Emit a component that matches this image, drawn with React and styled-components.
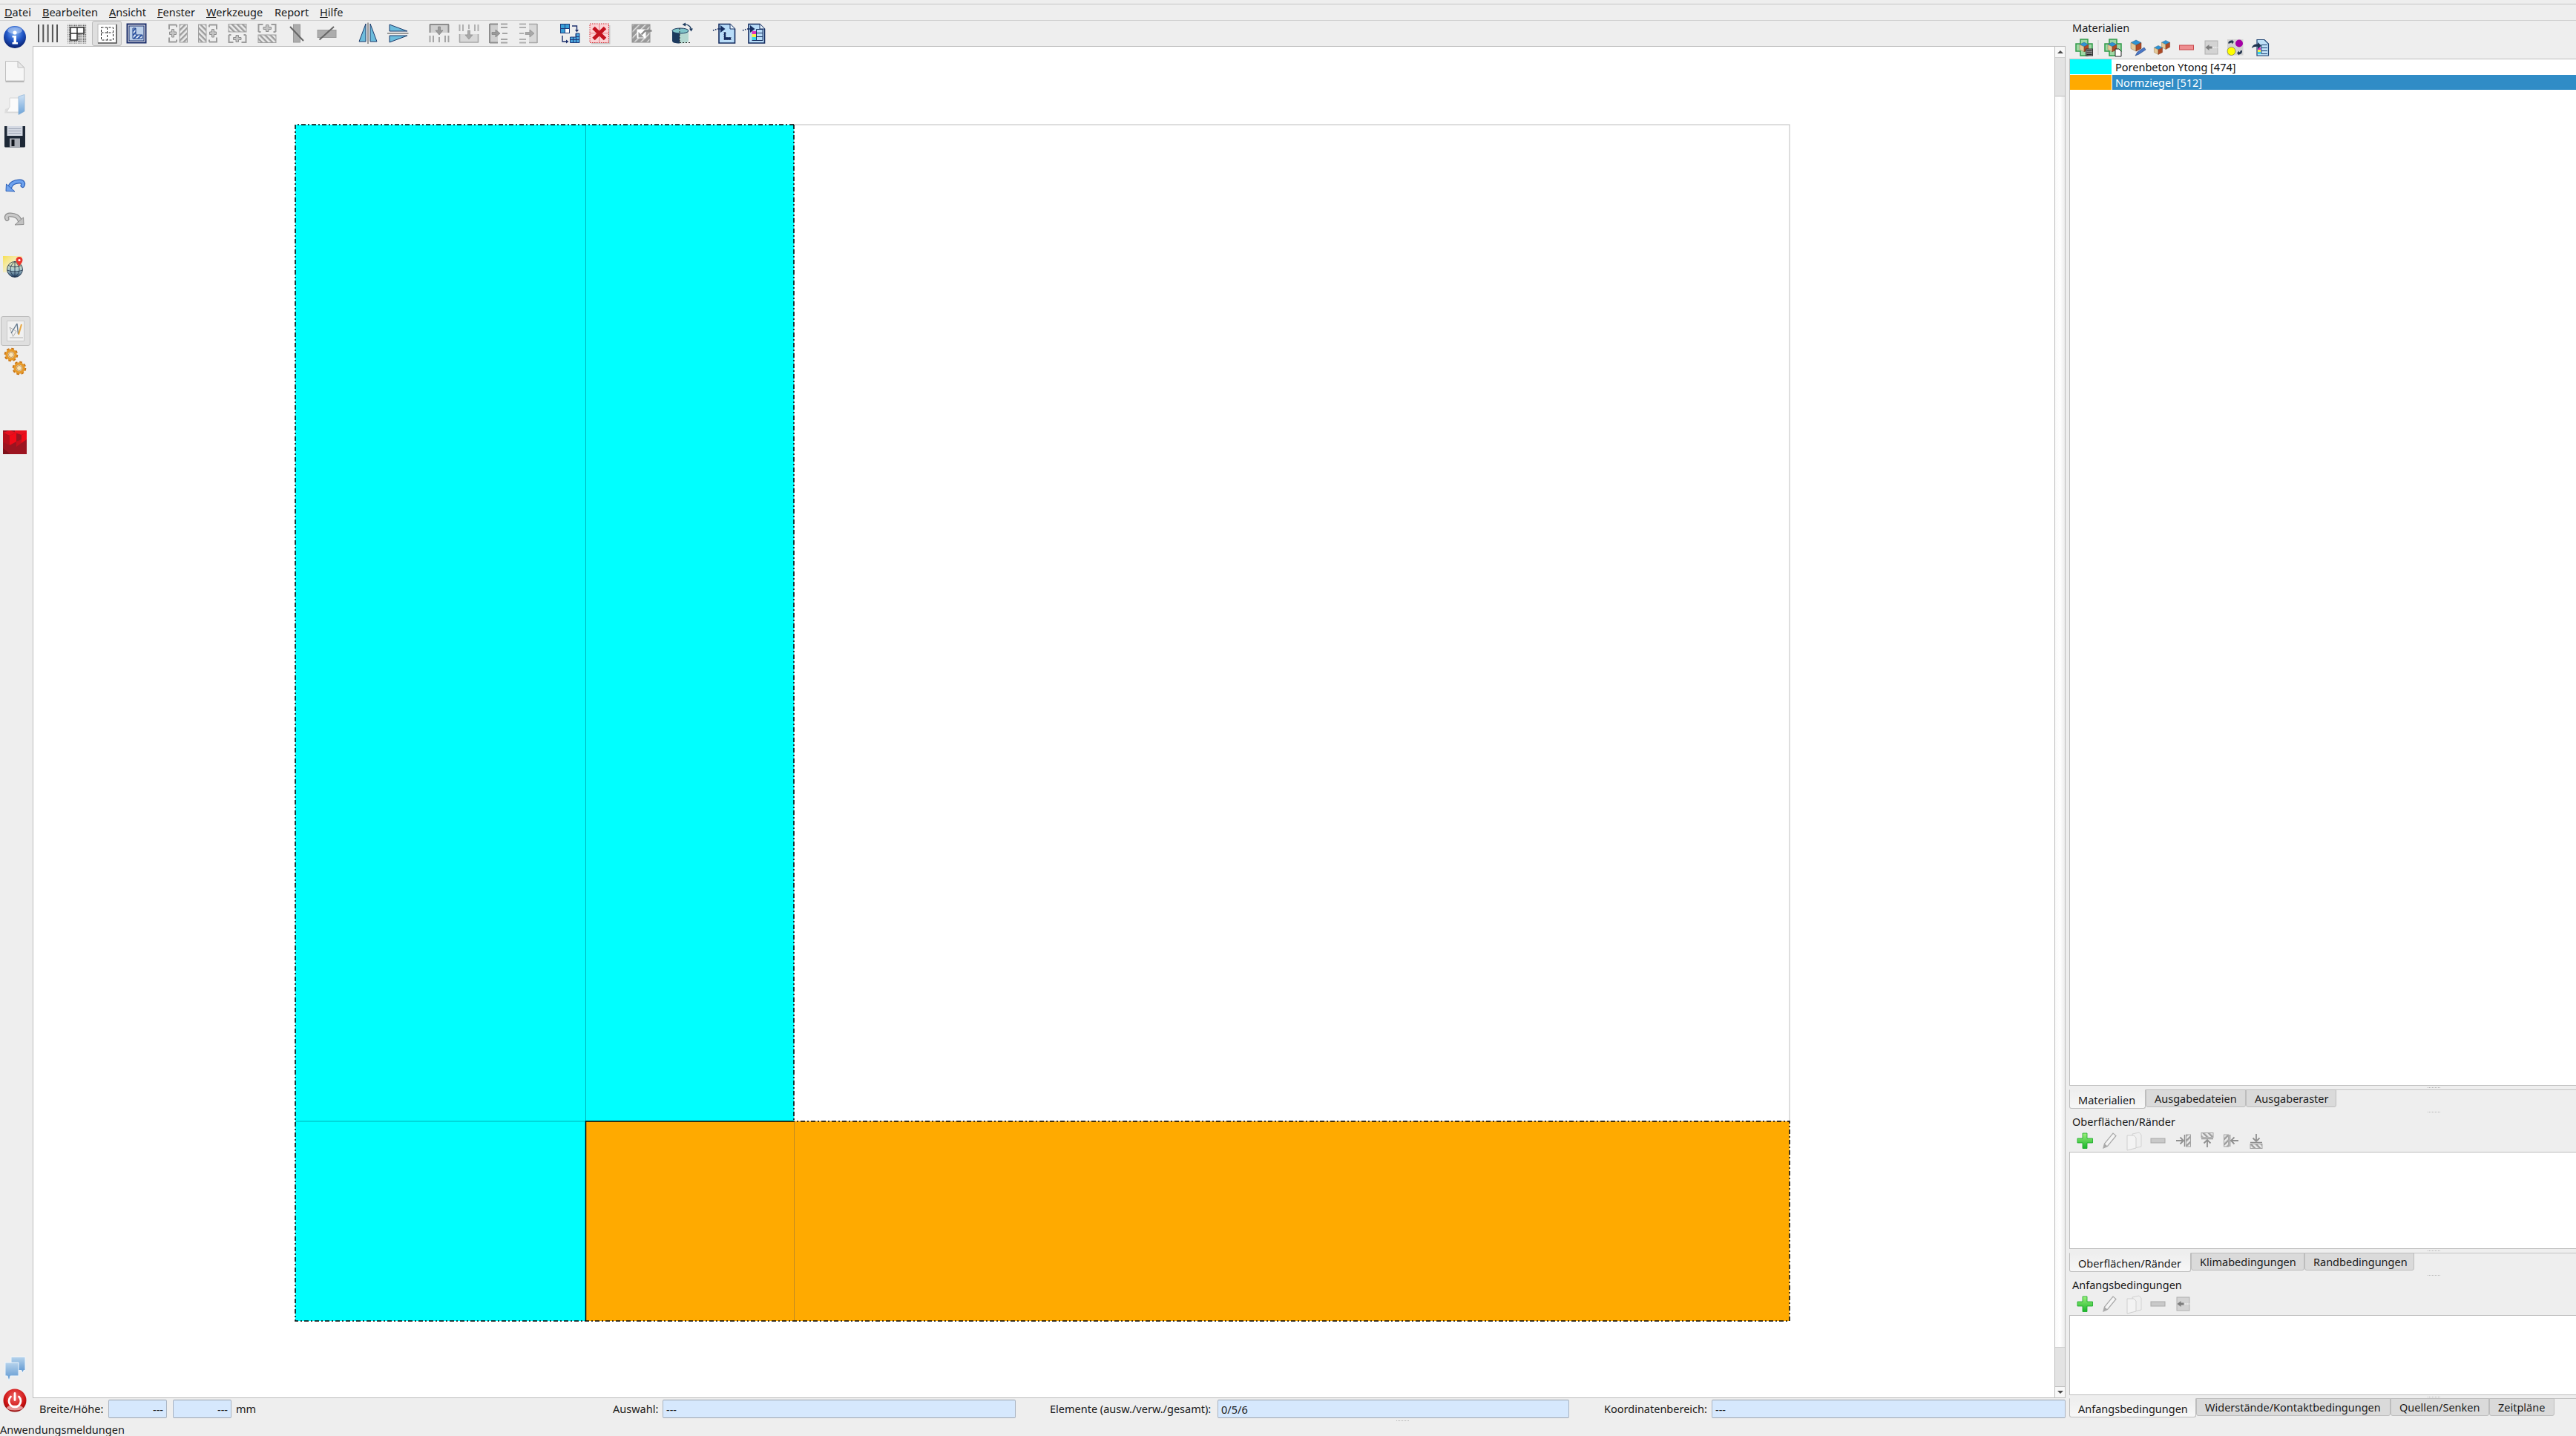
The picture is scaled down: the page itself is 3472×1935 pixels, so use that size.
import React from "react";
import styled, { createGlobalStyle } from "styled-components";

const Global = createGlobalStyle`
  html, body { margin: 0; padding: 0; background: #eeeeee; overflow: hidden; }
  * { box-sizing: border-box; }
`;

const Window = styled.div`
  width: 3472px;
  height: 1935px;
  display: flex;
  flex-direction: column;
  background: #eeeeee;
  color: #1a1a1a;
  font-family: "Noto Sans", "Open Sans", sans-serif;
  font-size: 14.5px;
  overflow: hidden;
`;
const TopStrip = styled.div`
  height: 6px;
  flex: none;
  border-bottom: 1px solid #c4c4c4;
`;
const MenuBar = styled.div`
  height: 22px;
  flex: none;
  display: flex;
  align-items: flex-start;
  border-bottom: 1px solid #cfcfcf;
`;
const MenuItem = styled.div`
  width: ${(p) => p.$w}px;
  padding-left: ${(p) => p.$pad || 0}px;
  line-height: 20px;
  white-space: nowrap;
`;
const Workspace = styled.div`
  flex: none;
  height: 1889px;
  display: flex;
`;
const LeftBar = styled.div`
  width: 44px;
  flex: none;
  display: flex;
  flex-direction: column;
  padding-bottom: 8px;
`;
const LeftSlot = styled.div`
  width: 40px;
  height: ${(p) => p.$h || 44}px;
  margin-top: ${(p) => p.$gap || 0}px;
  margin-left: ${(p) => (p.$active ? 1 : 0)}px;
  flex: none;
  display: flex;
  align-items: center;
  justify-content: center;
  ${(p) => p.$active && `
    background: #dfdfdf;
    border: 1px solid #bcbcbc;
    border-radius: 3px;
  `}
  ${(p) => p.$bottom && `margin-top: auto;`}
`;
const Center = styled.div`
  width: 2745px;
  flex: none;
  display: flex;
  flex-direction: column;
`;
const TopToolbar = styled.div`
  height: 34px;
  flex: none;
  display: flex;
  align-items: center;
`;
const ToolSlot = styled.div`
  width: 40px;
  height: 34px;
  flex: none;
  margin-left: ${(p) => p.$gap || 0}px;
  display: flex;
  align-items: center;
  justify-content: center;
  ${(p) => p.$active && `
    background: #dfdfdf;
    border: 1px solid #bcbcbc;
    border-radius: 3px;
  `}
`;
const CanvasRow = styled.div`
  flex: 1;
  display: flex;
  padding-right: 5px;
  min-height: 0;
`;
const Canvas = styled.div`
  flex: 1;
  background: #fff;
  border: 1px solid #bdbdbd;
  border-right: 0;
  padding: 104px 0 0 352px;
  overflow: hidden;
`;
const Drawing = styled.svg`
  display: block;
`;
const ScrollBar = styled.div`
  width: 15px;
  flex: none;
  display: flex;
  flex-direction: column;
  border: 1px solid #bdbdbd;
  background: linear-gradient(90deg, #fafafa, #ffffff 50%, #ececec);
`;
const ScrollButton = styled.div`
  height: 14px;
  flex: none;
  display: flex;
  align-items: center;
  justify-content: center;
  background: #f8f8f8;
  &::before {
    content: "";
    border-left: 4px solid transparent;
    border-right: 4px solid transparent;
    ${(p) => (p.$down ? "border-top" : "border-bottom")}: 4px solid #4a4a4a;
  }
`;
const ScrollThumb = styled.div`
  height: ${(p) => p.$h}px;
  flex: none;
  background: #e3e3e3;
  border-top: 1px solid #cfcfcf;
  border-bottom: 1px solid #bdbdbd;
`;
const ScrollTrack = styled.div`
  flex: 1;
`;
const StatusRow = styled.div`
  height: 33px;
  flex: none;
  display: flex;
  padding-top: 2px;
  position: relative;
`;
const StatusGroup = styled.div`
  width: ${(p) => p.$w}px;
  flex: none;
  display: flex;
  padding-left: ${(p) => p.$pad || 0}px;
  gap: ${(p) => p.$gap || 0}px;
`;
const StatusLabel = styled.div`
  width: ${(p) => p.$w}px;
  flex: none;
  margin-left: ${(p) => p.$gap || 0}px;
  line-height: 25px;
  white-space: nowrap;
`;
const Field = styled.div`
  width: ${(p) => p.$w}px;
  height: 25px;
  flex: none;
  margin-left: ${(p) => p.$gap || 0}px;
  padding: 0 4px;
  line-height: 24px;
  text-align: ${(p) => (p.$right ? "right" : "left")};
  background: #d6e8fd;
  border: 1px solid #aab4c2;
  border-top-color: #9aa3ae;
  border-bottom-color: #a0a6ae;
  border-radius: 2px;
`;
const Dock = styled.div`
  width: 683px;
  flex: none;
  display: flex;
  flex-direction: column;
`;
const DockLabel = styled.div`
  height: 20px;
  flex: none;
  padding-left: 4px;
  line-height: 19px;
  white-space: nowrap;
`;
const IconRow = styled.div`
  height: ${(p) => p.$h}px;
  flex: none;
  display: flex;
  align-items: center;
  padding-left: ${(p) => p.$pad}px;
`;
const IconSlot = styled.div`
  width: 33px;
  flex: none;
  display: flex;
  justify-content: center;
`;
const RowSeparator = styled.div`
  width: 2px;
  height: 20px;
  margin: 0 2px;
  flex: none;
  background: #dddddd;
`;
const ListPane = styled.div`
  height: ${(p) => p.$h}px;
  flex: none;
  background: #fff;
  border: 1px solid #bdbdbd;
  border-right: 0;
`;
const MaterialRow = styled.div`
  height: 20px;
  margin-bottom: 1px;
  display: flex;
`;
const Swatch = styled.div`
  width: 56px;
  flex: none;
  background: ${(p) => p.$color};
  margin-right: 1px;
`;
const MaterialName = styled.div`
  flex: 1;
  padding-left: 4px;
  line-height: 20px;
  background: ${(p) => (p.$selected ? "#308cc6" : "transparent")};
  color: ${(p) => (p.$selected ? "#fff" : "#111")};
`;
const Grip = styled.div`
  height: ${(p) => p.$h}px;
  flex: none;
  display: flex;
  align-items: center;
  padding-left: ${(p) => p.$left || 483}px;
  &::before {
    content: "";
    width: 17px;
    border-top: 1px dotted #b5b5b5;
  }
`;
const StatusGrip = styled(Grip)`
  position: absolute;
  left: 0;
  top: 27px;
`;
const TabBar = styled.div`
  height: 26px;
  flex: none;
  display: flex;
  align-items: flex-start;
  border-top: 1px solid #c4c4c4;
`;
const Tab = styled.div`
  width: ${(p) => p.$w}px;
  height: ${(p) => (p.$active ? 26 : 24)}px;
  flex: none;
  margin-top: -1px;
  padding-left: 11px;
  line-height: ${(p) => (p.$active ? 26 : 23)}px;
  white-space: nowrap;
  border: 1px solid #bdbdbd;
  border-radius: 0 0 3px 3px;
  background: ${(p) =>
    p.$active ? "linear-gradient(#eeeeee, #f7f7f7)" : "#dadada"};
  ${(p) => p.$active && "border-top-color: #eeeeee;"}
`;
const Footer = styled.div`
  flex: 1;
  padding-top: 1px;
  line-height: 17px;
  white-space: nowrap;
`;
const IconSvg = styled.svg`
  display: block;
  overflow: visible;
  flex: none;
`;
const Defs = styled.svg`
  display: block;
  width: 0;
  height: 0;
  flex: none;
`;

const Icon = ({ children }) => (
  <IconSvg width="32" height="32" viewBox="0 0 32 32">
    {children}
  </IconSvg>
);

const SharedDefs = () => (
  <Defs>
    <defs>
      <pattern id="hatchGrey" width="5" height="5" patternUnits="userSpaceOnUse" patternTransform="rotate(45)">
        <rect width="5" height="5" fill="#ededed" />
        <rect width="2.4" height="5" fill="#9c9c9c" />
      </pattern>
      <pattern id="hatchDark" width="6" height="6" patternUnits="userSpaceOnUse" patternTransform="rotate(45)">
        <rect width="6" height="6" fill="#9a9a9a" />
        <rect width="1.4" height="6" fill="#e8e8e8" />
      </pattern>
      <pattern id="hatchBlue" width="4" height="4" patternUnits="userSpaceOnUse" patternTransform="rotate(45)">
        <rect width="4" height="4" fill="#dfe9f6" />
        <rect width="2" height="4" fill="#2b57a8" />
      </pattern>
      <pattern id="dots" width="2.4" height="2.4" patternUnits="userSpaceOnUse">
        <rect width="1.3" height="1.3" fill="#333" />
      </pattern>
      <radialGradient id="orb" cx="50%" cy="30%" r="75%">
        <stop offset="0" stopColor="#86b6f5" />
        <stop offset="0.5" stopColor="#1f55c6" />
        <stop offset="1" stopColor="#06185f" />
      </radialGradient>
      <radialGradient id="redOrb" cx="50%" cy="35%" r="75%">
        <stop offset="0" stopColor="#f06a6a" />
        <stop offset="0.6" stopColor="#cf1414" />
        <stop offset="1" stopColor="#6e0505" />
      </radialGradient>
      <linearGradient id="bubble" x1="0" y1="0" x2="0" y2="1">
        <stop offset="0" stopColor="#b6d3ec" />
        <stop offset="1" stopColor="#5a94cf" />
      </linearGradient>
      <linearGradient id="sun" x1="0" y1="0" x2="1" y2="1">
        <stop offset="0" stopColor="#f7df4e" />
        <stop offset="1" stopColor="#fdf8d8" stopOpacity="0.1" />
      </linearGradient>
      <linearGradient id="globe" x1="0" y1="0" x2="0" y2="1">
        <stop offset="0" stopColor="#ece8b0" />
        <stop offset="0.55" stopColor="#a8c8d0" />
        <stop offset="1" stopColor="#1f3f66" />
      </linearGradient>
      <linearGradient id="greenPlus" x1="0" y1="0" x2="0" y2="1">
        <stop offset="0" stopColor="#9cf07c" />
        <stop offset="1" stopColor="#18b52a" />
      </linearGradient>
      <linearGradient id="folderBlue" x1="0" y1="0" x2="0" y2="1">
        <stop offset="0" stopColor="#cfe2f5" />
        <stop offset="1" stopColor="#6da3d8" />
      </linearGradient>
    </defs>
  </Defs>
);

/* top toolbar */
const GridLines = () => (
  <Icon>
    {[3, 9.3, 15.6, 21.9, 28].map((x) => (
      <rect key={x} x={x} y="4" width="2" height="24" fill="#555" />
    ))}
  </Icon>
);
const GridDots = () => (
  <Icon>
    <rect x="3" y="3.5" width="26" height="26" fill="url(#dots)" />
    <path d="M7 8h18v8h-9v9H7z" fill="#fff" stroke="#333" strokeWidth="1.6" />
    <path d="M16 8v9M7 16h9" stroke="#333" strokeWidth="1.6" />
  </Icon>
);
const DashedView = () => (
  <Icon>
    <rect x="4" y="3.5" width="25" height="25.5" fill="#fff" stroke="#bbb" />
    <path d="M4 29h25V4" fill="none" stroke="#555" strokeWidth="1.6" />
    <rect x="8.5" y="8" width="16" height="17" fill="none" stroke="#222" strokeDasharray="3 2" />
    <path d="M16.5 8v17M8.5 15h16" fill="none" stroke="#222" strokeDasharray="3 2" />
  </Icon>
);
const FrameView = () => (
  <Icon>
    <rect x="3.5" y="3.5" width="25" height="25" fill="#fff" stroke="#1c2f6b" strokeWidth="2" />
    <rect x="6" y="6" width="20" height="20" fill="#bcd0ea" stroke="#1c2f6b" />
    <path d="M11 9h4v9h9v5H11z" fill="url(#hatchBlue)" stroke="#1c3f8a" />
  </Icon>
);
const WallPlus = ({ turn = "" }) => (
  <Icon>
    <g transform={turn}>
      <path d="M14 4.5H4v6M4 21.5v6h10M14 4.5v3M14 27.5v-3" fill="none" stroke="#9b9b9b" strokeWidth="2" />
      <path d="M7 14h3v-3.5h3V14h3v3.5h-3V21h-3v-3.5H7z" transform="translate(-2.5 0)" fill="#c4c4c4" stroke="#8e8e8e" />
      <rect x="18" y="4" width="10.5" height="24" fill="url(#hatchGrey)" stroke="#a0a0a0" />
    </g>
  </Icon>
);
const SlashBar = ({ wide }) => (
  <Icon>
    {wide ? (
      <>
        <rect x="4" y="11.5" width="25" height="10" fill="#acacac" stroke="#9a9a9a" />
        <path d="M6.5 24.5L26 7" stroke="#666" strokeWidth="2" />
      </>
    ) : (
      <>
        <rect x="11.5" y="4" width="9" height="24" fill="#acacac" stroke="#9a9a9a" />
        <path d="M7 7l18 19" stroke="#666" strokeWidth="2" />
      </>
    )}
  </Icon>
);
const Mirror = ({ turn = "" }) => (
  <Icon>
    <g transform={turn}>
      <path d="M4 27L13 3v24z" fill="#6cbcdc" stroke="#1b3a6b" />
      <path d="M28 27L19 3v24z" fill="#6cbcdc" stroke="#1b3a6b" />
      <path d="M16 1.5V30" stroke="#444" />
    </g>
  </Icon>
);
const AlignTop = ({ turn = "" }) => (
  <Icon>
    <g transform={turn}>
      <rect x="3" y="4" width="26" height="11" fill="#cfcfcf" />
      <path d="M3 4h26M3.5 4v11M28.5 4v11" stroke="#8d8d8d" strokeWidth="2" fill="none" />
      <path d="M3.5 19v9M8 19v9M16 21v7M24 19v9M28.5 19v9" stroke="#a5a5a5" strokeWidth="2" />
      <path d="M14.5 7h3v5H21l-5 6-5-6h3.5z" fill="#9a9a9a" stroke="#777" strokeWidth="0.6" />
    </g>
  </Icon>
);
const AlignBottom = ({ turn = "" }) => (
  <Icon>
    <g transform={turn}>
      <rect x="3" y="17" width="26" height="11" fill="#d8d8d8" />
      <path d="M3 28h26M3.5 17v11M28.5 17v11" stroke="#a8a8a8" strokeWidth="1.6" fill="none" />
      <path d="M3.5 4v9M8 4v9M16 4v6M24 4v9M28.5 4v9" stroke="#b0b0b0" strokeWidth="2" />
      <path d="M14.5 12h3v6H21l-5 6-5-6h3.5z" fill="#a8a8a8" stroke="#888" strokeWidth="0.6" />
    </g>
  </Icon>
);
const GridSwap = () => (
  <Icon>
    <rect x="3.5" y="3.5" width="12" height="12" fill="#3a9fd8" stroke="#1c3a7a" />
    <path d="M9.5 3.5v12M3.5 9.5h12" stroke="#1c3a7a" />
    <rect x="9.5" y="9.5" width="6" height="6" fill="#fff" stroke="#1c3a7a" />
    <path d="M19 6h6.5v6" fill="none" stroke="#1c2f6b" strokeWidth="1.4" />
    <path d="M23 11l2.5 3.5 2.5-3.5z" fill="#1c2f6b" />
    <path d="M6 19v8h6" fill="none" stroke="#1c2f6b" strokeWidth="1.4" />
    <path d="M11 24.5l3.5 2.5-3.5 2.5z" fill="#1c2f6b" />
    <path d="M24 16h5v12.5H16.5V21H24z" fill="#4aa4dc" stroke="#1c3a7a" />
    <path d="M20.5 21v7.5M24.5 16v12.5M16.5 24.5h12.5M24.5 20.5h4.5" stroke="#1c3a7a" />
  </Icon>
);
const DeleteBox = () => (
  <Icon>
    <rect x="5" y="5" width="25.5" height="25.5" fill="#c9c9c9" />
    <rect x="3" y="3" width="25.5" height="25.5" fill="#fbd3d6" stroke="#d8232a" strokeDasharray="1.5 1.5" />
    <path d="M15.75 3v25.5M3 15.75h25.5" stroke="#ea7d85" />
    <path d="M8 8.5l15.5 15M23.5 8.5L8 23.5" stroke="#c4121f" strokeWidth="5" />
  </Icon>
);
const ImportBox = () => (
  <Icon>
    <rect x="4" y="4" width="24" height="24" fill="url(#hatchDark)" stroke="#8f8f8f" />
    <rect x="10.5" y="10.5" width="12" height="12" fill="#fff" />
    <path d="M30.5 12.5h-9l-5 5" fill="none" stroke="#888" strokeWidth="2.4" />
    <path d="M12.5 14v7.5H20z" fill="#9a9a9a" />
  </Icon>
);
const Cylinder = () => (
  <Icon>
    <path d="M2 12.5V26c0 2.5 4 3.5 10 3.5V12.5z" fill="#1c3a5e" />
    <path d="M12 13v16.5c6 0 12-1 12-3.5V13z" fill="#b4d8d0" />
    <ellipse cx="13" cy="12.5" rx="11" ry="3.5" fill="#7fc4c8" stroke="#1c3a5e" />
    <path d="M12 9v20M12 28.5h14" stroke="#222" strokeDasharray="2 2" fill="none" />
    <path d="M17 4c5-.5 9 1 10.5 6" fill="none" stroke="#1c3a5e" strokeWidth="1.4" />
    <path d="M20 1.5l-4.5 2.5 4.5 2.5zM25 9.5l2.5 4 2.5-4z" fill="#1c3a5e" />
  </Icon>
);
const DocArrow = ({ table }) => (
  <Icon>
    <path d="M9 3.5h15l6.500 6.500v19H9z" fill="#b8dcf8" stroke="#142c5f" strokeWidth="1.6" />
    <path d="M24 3.5V10h6.500" fill="#e6f3fd" stroke="#142c5f" />
    {table ? (
      <>
        <rect x="13.5" y="13" width="5.5" height="12" fill="#f5f04a" />
        <rect x="13.5" y="13" width="5.5" height="4" fill="#e030c0" />
        <rect x="13.5" y="21" width="5.5" height="4" fill="#38d4e8" />
        <path d="M19.5 10.5h8.5v15h-14.5M19.5 10.5v15M19.5 15.5h8.5M19.5 20.5h8.5" fill="none" stroke="#142c5f" />
      </>
    ) : (
      <path d="M15.5 14h3v7h7v4h-10z" fill="#142c5f" stroke="#fff" strokeDasharray="2 1" strokeWidth="0.5" />
    )}
    <path d="M1 12l1.5-.6M4 11l1.5-.5M7 10h5" stroke="#142c5f" strokeWidth="1.6" />
    <path d="M11 5l6.500 5-6.500 5z" fill="#142c5f" />
  </Icon>
);

/* left bar */
const InfoOrb = () => (
  <Icon>
    <circle cx="16" cy="16" r="15" fill="url(#orb)" />
    <ellipse cx="16" cy="7" rx="10" ry="4.5" fill="#c9defa" opacity="0.5" />
    <circle cx="16" cy="10" r="2.6" fill="#fff" />
    <path d="M12.5 14h5.500v9h2v2.500h-7.500V23h2v-6.500h-2z" fill="#fff" />
  </Icon>
);
const NewDoc = () => (
  <Icon>
    <path d="M3.5 2.5H20l8.500 8.500v18H3.500z" fill="#f6f6f6" stroke="#c0c0c0" />
    <path d="M20 2.5V11h8.500z" fill="#e8e8e8" stroke="#c0c0c0" />
    <path d="M3.5 30h25" stroke="#8f8f8f" strokeWidth="1" />
  </Icon>
);
const OpenFolder = () => (
  <Icon>
    <path d="M2 28.5h20V9l-8 1.500v9L3 23z" fill="#dedede" />
    <path d="M9 20V8h13v19H5z" fill="#fbfbfb" stroke="#d6d6d6" />
    <path d="M21 6l8-2.500V26l-8 4.500z" fill="url(#folderBlue)" stroke="#7ea9d2" strokeWidth="0.6" />
  </Icon>
);
const Floppy = () => (
  <Icon>
    <path d="M2 2h28v27a1.500 1.500 0 0 1-1.500 1.500h-25A1.500 1.500 0 0 1 2 29z" fill="#1d2836" />
    <rect x="5.5" y="2" width="21" height="13" fill="#d3d8e2" />
    <path d="M7.5 5.5h17M7.5 8.5h17M7.5 11.5h17" stroke="#9da5b5" />
    <rect x="9" y="18.5" width="14" height="12" fill="#a9adb5" />
    <rect x="11.5" y="20" width="4" height="9" fill="#10151d" />
  </Icon>
);
const Undo = ({ grey }) => (
  <Icon>
    <g transform={grey ? "translate(32 0) scale(-1 1)" : ""}>
      <path d="M9 20.5c1-6 7-9.500 14-9 4 .3 5 3 3.500 5.500" fill="none" stroke={grey ? "#8e8e8e" : "#2f62b8"} strokeWidth="6" strokeLinecap="round" />
      <path d="M9 20.5c1-6 7-9.500 14-9 4 .3 5 3 3.500 5.500" fill="none" stroke={grey ? "#c9c9c9" : "#6ea2ee"} strokeWidth="3.6" strokeLinecap="round" />
      <path d="M4.5 15l-.5 9.500 12 .5z" fill={grey ? "#c2c2c2" : "#6ea2ee"} stroke={grey ? "#8e8e8e" : "#2f62b8"} />
    </g>
  </Icon>
);
const GlobePin = () => (
  <Icon>
    <rect x="0" y="2" width="26" height="22" fill="url(#sun)" />
    <circle cx="16" cy="20" r="10.5" fill="url(#globe)" stroke="#1b2c44" strokeWidth="0.8" />
    <path d="M7 14.500c6 3 12 3 18 0M5.500 21c7 2.500 14 2.500 21 0M16 9.500v21M16 9.500c-8 6-8 15 0 21M16 9.500c8 6 8 15 0 21" fill="none" stroke="#1b2c44" strokeWidth="0.8" />
    <path d="M22 15.500c-2.500-3.500-4.500-5.500-4.500-8a4.500 4.500 0 0 1 9 0c0 2.500-2 4.500-4.500 8z" fill="#e8352e" />
    <circle cx="22" cy="7.5" r="1.6" fill="#fff" />
  </Icon>
);
const DrawTools = () => (
  <Icon>
    <rect x="4.5" y="2.5" width="23" height="27" fill="#f1f1f1" stroke="#c9c9c9" />
    <path d="M8 11l9 5.500-4.500 7zM8 25h18" fill="none" stroke="#b0b0b0" />
    <path d="M18 6L10 19M18 6l1.500 14" stroke="#657a8e" strokeWidth="1.4" fill="none" />
    <path d="M24 7l-4 14" stroke="#e8a742" strokeWidth="2" />
  </Icon>
);
const Gear = ({ cx, cy }) => (
  <>
    <circle cx={cx} cy={cy} r="7.7" fill="none" stroke="#c8710f" strokeWidth="3.2" strokeDasharray="3.4 2.65" />
    <circle cx={cx} cy={cy} r="6" fill="none" stroke="#e59a2c" strokeWidth="3.4" />
    <circle cx={cx} cy={cy} r="3.5" fill="#fbe4b2" stroke="#9c5a10" strokeWidth="0.6" />
  </>
);
const Gears = () => (
  <Icon>
    <Gear cx={11} cy={8} />
    <Gear cx={22} cy={26} />
  </Icon>
);
const RedBlock = () => (
  <Icon>
    <rect width="32" height="32" fill="#9c1420" />
    <path d="M0 3l9-3 9 3-9 4zM16 0h16v3l-7 3-9-3z" fill="#e8101e" />
    <path d="M9 7l9-4v12l-9 5zM25 6l7-3v9l-7 5z" fill="#f00a18" />
    <path d="M0 3l9 4v13l-9-4z" fill="#b5101c" />
    <path d="M18 15l7-3v5l-7 5z" fill="#c4101c" />
    <path d="M0 24l10 8H0z" fill="#7e1019" />
  </Icon>
);
const Chat = () => (
  <Icon>
    <path d="M11 1.5h19v18h-2l-1.500 3.500-1.500-3.500H11z" fill="url(#bubble)" stroke="#eef5fb" />
    <path d="M3 9h18v18H10l-2 7-2-7H3z" fill="url(#bubble)" stroke="#eef5fb" />
  </Icon>
);
const Power = () => (
  <Icon>
    <ellipse cx="16" cy="16" rx="15.5" ry="15.5" fill="url(#redOrb)" />
    <ellipse cx="16" cy="26" rx="11" ry="3.5" fill="#f5b8b8" opacity="0.8" />
    <path d="M10.5 11a8 8 0 1 0 11 0" fill="none" stroke="#fff" strokeWidth="2.8" strokeLinecap="round" />
    <path d="M16 6.5v9" stroke="#fff" strokeWidth="2.8" strokeLinecap="round" />
  </Icon>
);

/* dock icons */
const Cube = ({ x, y, s = 1 }) => (
  <g transform={`translate(${x} ${y}) scale(${s})`}>
    <path d="M0-7l7 3.500-7 3.500-7-3.500z" fill="#2e93d4" stroke="#20557e" strokeWidth="0.5" />
    <path d="M-7-3.500L0 0v8l-7-3.500z" fill="#e4c99a" stroke="#8d6e40" strokeWidth="0.5" />
    <path d="M7-3.500L0 0v8l7-3.500z" fill="#ad4a26" stroke="#6e2c14" strokeWidth="0.5" />
  </g>
);
const GreenCross = () => (
  <path d="M11 5h10v6h6v10h-6v6H11v-6H5V11h6z" fill="#9ed7a4" stroke="#2f9a48" strokeWidth="1.5" />
);
const AddMaterial = () => (
  <Icon>
    <GreenCross />
    <Cube x={16} y={15} s={0.85} />
    <rect x="18.5" y="18" width="9" height="9" fill="#8a8a8a" stroke="#333" />
    <path d="M19.5 20.5h7M19.5 23h7M19.5 25.5h7" stroke="#222" />
  </Icon>
);
const AddMaterialDoc = () => (
  <Icon>
    <GreenCross />
    <Cube x={15} y={15} s={0.85} />
    <path d="M19 18h5l3 3v7h-8z" fill="#fff" stroke="#222" />
  </Icon>
);
const EditMaterial = () => (
  <Icon>
    <Cube x={14} y={13} s={1} />
    <path d="M13 27l3-5 9-6 2 3-9 6z" fill="#4a78c8" stroke="#1f3f7a" strokeWidth="0.6" />
  </Icon>
);
const CopyMaterial = () => (
  <Icon>
    <Cube x={21} y={12} s={0.8} />
    <Cube x={11} y={19} s={0.8} />
  </Icon>
);
const RemoveBar = ({ grey }) => (
  <Icon>
    <rect x={grey ? 6 : 6.5} y="13" width="19" height="6" fill={grey ? "#c9c9c9" : "#ee8e90"} stroke={grey ? "#a9a9a9" : "#c8484c"} />
  </Icon>
);
const ImportSquare = () => (
  <Icon>
    <rect x="8" y="7" width="17" height="18" fill="#d3d3d3" stroke="#b0b0b0" />
    <path d="M8.5 16l5-4v2.500h4v3h-4V20z" fill="#7d7d7d" />
    <path d="M18.5 16h7" stroke="#fff" strokeDasharray="2 1" />
  </Icon>
);
const ColorSwap = () => (
  <Icon>
    <rect x="5" y="5" width="21.5" height="21.5" fill="#d2d2d2" />
    <circle cx="21" cy="10.5" r="5" fill="#a500a5" />
    <circle cx="10.5" cy="21" r="5.5" fill="#ffff00" stroke="#444" strokeWidth="0.5" />
    <path d="M6 10.5a5 5 0 0 1 5-4v-1l3 3-3 3v-2a3 3 0 0 0-2.500 1z" fill="#24364f" />
    <path d="M25 20a5 5 0 0 1-4 5.500v1l-3-3 3-3v2a3 3 0 0 0 2-2.500z" fill="#24364f" />
  </Icon>
);
const MaterialSheet = () => (
  <Icon>
    <path d="M12 5.5h10l5.500 5.500v16H12z" fill="#bfe0f7" stroke="#1d4272" strokeWidth="1.2" />
    <path d="M18 12.5h8M18 16.5h8M18 20.5h8M18 12.5v12h8" fill="none" stroke="#1d4272" />
    <rect x="13" y="16" width="4" height="3" fill="#e030c0" />
    <rect x="13" y="19" width="4" height="3" fill="#f5f04a" />
    <rect x="13" y="22" width="4" height="3" fill="#38d4e8" />
    <path d="M5 17c.5-4 4-6 8-5.500V9l5 4.500-5 4.500v-3c-3-.5-6 .5-8 2z" fill="#1f3350" />
  </Icon>
);
const GreenPlus = () => (
  <Icon>
    <path d="M13 6h6v7h7.500v6H19v7.500h-6V19H6v-6h7z" fill="url(#greenPlus)" stroke="#14a824" strokeWidth="0.8" />
  </Icon>
);
const Pencil = () => (
  <Icon>
    <path d="M8 26l1.500-6L21 6l4 3.500-11.500 14z" fill="#f4f4f4" stroke="#a9a9a9" strokeWidth="1.2" />
    <path d="M8 26l1.500-6 4 3.500z" fill="#a9a9a9" />
  </Icon>
);
const CopyDoc = () => (
  <Icon>
    <path d="M14 7l9-2 3 3v16l-9 2z" fill="#efefef" stroke="#d2d2d2" />
    <path d="M7 9h9l3 3v14l-12 3z" fill="#f3f3f3" stroke="#cfcfcf" />
  </Icon>
);
const ToBar = ({ turn = "" }) => (
  <Icon>
    <g transform={turn}>
      <path d="M7 16h9M12.5 11.5L17 16l-4.500 4.500" fill="none" stroke="#909090" strokeWidth="1.8" />
      <path d="M18.5 8v16" stroke="#8d8d8d" strokeWidth="1.5" />
      <rect x="20.5" y="8" width="6" height="16" fill="url(#hatchGrey)" stroke="#a3a3a3" />
    </g>
  </Icon>
);

const menu = [
  ["D", "atei", 57, 6],
  ["B", "earbeiten", 90, 0],
  ["A", "nsicht", 65, 0],
  ["F", "enster", 66, 0],
  ["W", "erkzeuge", 92, 0],
  [null, "Report", 61, 0],
  ["H", "ilfe", 60, 0],
];

const toolbar = [
  [<GridLines />], [<GridDots />], [<DashedView />, 0, true], [<FrameView />],
  [<WallPlus />, 16], [<WallPlus turn="translate(32 0) scale(-1 1)" />],
  [<WallPlus turn="rotate(-90 16 16)" />], [<WallPlus turn="rotate(90 16 16)" />],
  [<SlashBar />], [<SlashBar wide />],
  [<Mirror />, 16], [<Mirror turn="rotate(90 16 16)" />],
  [<AlignTop />, 16], [<AlignBottom />],
  [<AlignTop turn="rotate(-90 16 16)" />], [<AlignBottom turn="rotate(-90 16 16)" />],
  [<GridSwap />, 16], [<DeleteBox />],
  [<ImportBox />, 16], [<Cylinder />, 16],
  [<DocArrow />, 16], [<DocArrow table />],
];

const tabsA = [["Materialien", 103, true], ["Ausgabedateien", 135], ["Ausgaberaster", 122]];
const tabsB = [["Oberflächen/Ränder", 164, true], ["Klimabedingungen", 153], ["Randbedingungen", 148]];
const tabsC = [["Anfangsbedingungen", 171, true], ["Widerstände/Kontaktbedingungen", 262], ["Quellen/Senken", 133], ["Zeitpläne", 88]];

const Tabs = ({ items }) => (
  <TabBar>
    {items.map(([label, w, active]) => (
      <Tab key={label} $w={w} $active={active}>{label}</Tab>
    ))}
  </TabBar>
);

const ToolRow = ({ icons }) => (
  <IconRow $h={30} $pad={4}>
    {icons.map((icon, i) => (
      <IconSlot key={i}>{icon}</IconSlot>
    ))}
  </IconRow>
);

const Structure = () => (
  <Drawing width="2020" height="1620" viewBox="0 0 2020 1620">
    <rect x="673" y="1" width="1342" height="1343" fill="#fff" stroke="#bdbdbd" />
    <path d="M1 1h672v1343h-280v269H1z" fill="#00ffff" />
    <path d="M393 1344h1622v269H393z" fill="#ffaa00" />
    <path d="M1 1344h392M392.5 1V1344" stroke="#00b4b8" strokeWidth="1" fill="none" />
    <path d="M673.5 1344v269" stroke="#bf8a24" strokeWidth="1" />
    <path d="M392.5 1344V1613M392 1344h281" stroke="#000" strokeWidth="1.5" fill="none" />
    <path d="M673 1V1344M673 1H1V1613H2015V1344H673" stroke="#000" strokeWidth="1.5" strokeDasharray="6 3 2 3" fill="none" />
  </Drawing>
);

const Materials = [
  ["Porenbeton Ytong [474]", "#00ffff", false],
  ["Normziegel [512]", "#ffaa00", true],
];

export default function App() {
  return (
    <Window>
      <Global />
      <SharedDefs />
      <TopStrip />
      <MenuBar>
        {menu.map(([key, rest, w, pad]) => (
          <MenuItem key={rest} $w={w} $pad={pad}>
            {key && <u>{key}</u>}
            {rest}
          </MenuItem>
        ))}
      </MenuBar>
      <Workspace>
        <LeftBar>
          <LeftSlot><InfoOrb /></LeftSlot>
          <LeftSlot $gap={2}><NewDoc /></LeftSlot>
          <LeftSlot><OpenFolder /></LeftSlot>
          <LeftSlot><Floppy /></LeftSlot>
          <LeftSlot $gap={21}><Undo /></LeftSlot>
          <LeftSlot $gap={1}><Undo grey /></LeftSlot>
          <LeftSlot $gap={21}><GlobePin /></LeftSlot>
          <LeftSlot $gap={45} $h={40} $active><DrawTools /></LeftSlot>
          <LeftSlot $h={40}><Gears /></LeftSlot>
          <LeftSlot $gap={68}><RedBlock /></LeftSlot>
          <LeftSlot $bottom><Chat /></LeftSlot>
          <LeftSlot><Power /></LeftSlot>
        </LeftBar>
        <Center>
          <TopToolbar>
            {toolbar.map(([icon, gap, active], i) => (
              <ToolSlot key={i} $gap={gap} $active={active}>{icon}</ToolSlot>
            ))}
          </TopToolbar>
          <CanvasRow>
            <Canvas><Structure /></Canvas>
            <ScrollBar>
              <ScrollButton />
              <ScrollThumb $h={53} />
              <ScrollTrack />
              <ScrollThumb $h={54} />
              <ScrollButton $down />
            </ScrollBar>
          </CanvasRow>
          <StatusRow>
            <StatusGroup $w={782} $pad={9}>
              <StatusLabel $w={93}>Breite/Höhe:</StatusLabel>
              <Field $w={79} $right>---</Field>
              <Field $w={79} $right $gap={8}>---</Field>
              <StatusLabel $w={40} $gap={6}>mm</StatusLabel>
            </StatusGroup>
            <StatusGroup $w={589}>
              <StatusLabel $w={67}>Auswahl:</StatusLabel>
              <Field $w={476}>---</Field>
            </StatusGroup>
            <StatusGroup $w={747}>
              <StatusLabel $w={226}>Elemente (ausw./verw./gesamt):</StatusLabel>
              <Field $w={474}>0/5/6</Field>
            </StatusGroup>
            <StatusGroup $w={622}>
              <StatusLabel $w={145}>Koordinatenbereich:</StatusLabel>
              <Field $w={477}>---</Field>
            </StatusGroup>
            <StatusGrip $h={6} $left={1838} />
          </StatusRow>
        </Center>
        <Dock>
          <DockLabel>Materialien</DockLabel>
          <IconRow $h={31} $pad={3}>
            <IconSlot><AddMaterial /></IconSlot>
            <RowSeparator />
            <IconSlot><AddMaterialDoc /></IconSlot>
            <IconSlot><EditMaterial /></IconSlot>
            <IconSlot><CopyMaterial /></IconSlot>
            <IconSlot><RemoveBar /></IconSlot>
            <IconSlot><ImportSquare /></IconSlot>
            <IconSlot><ColorSwap /></IconSlot>
            <IconSlot><MaterialSheet /></IconSlot>
          </IconRow>
          <ListPane $h={1384}>
            {Materials.map(([name, color, selected]) => (
              <MaterialRow key={name}>
                <Swatch $color={color} />
                <MaterialName $selected={selected}>{name}</MaterialName>
              </MaterialRow>
            ))}
          </ListPane>
          <Grip $h={5} />
          <Tabs items={tabsA} />
          <Grip $h={8} />
          <DockLabel>Oberflächen/Ränder</DockLabel>
          <ToolRow
            icons={[
              <GreenPlus />, <Pencil />, <CopyDoc />, <RemoveBar grey />,
              <ToBar />, <ToBar turn="rotate(-90 16 16)" />,
              <ToBar turn="rotate(180 16 16)" />, <ToBar turn="rotate(90 16 16)" />,
            ]}
          />
          <ListPane $h={131} />
          <Grip $h={5} />
          <Tabs items={tabsB} />
          <Grip $h={8} />
          <DockLabel>Anfangsbedingungen</DockLabel>
          <ToolRow
            icons={[<GreenPlus />, <Pencil />, <CopyDoc />, <RemoveBar grey />, <ImportSquare />]}
          />
          <ListPane $h={108} />
          <Grip $h={4} />
          <Tabs items={tabsC} />
        </Dock>
      </Workspace>
      <Footer>Anwendungsmeldungen</Footer>
    </Window>
  );
}
